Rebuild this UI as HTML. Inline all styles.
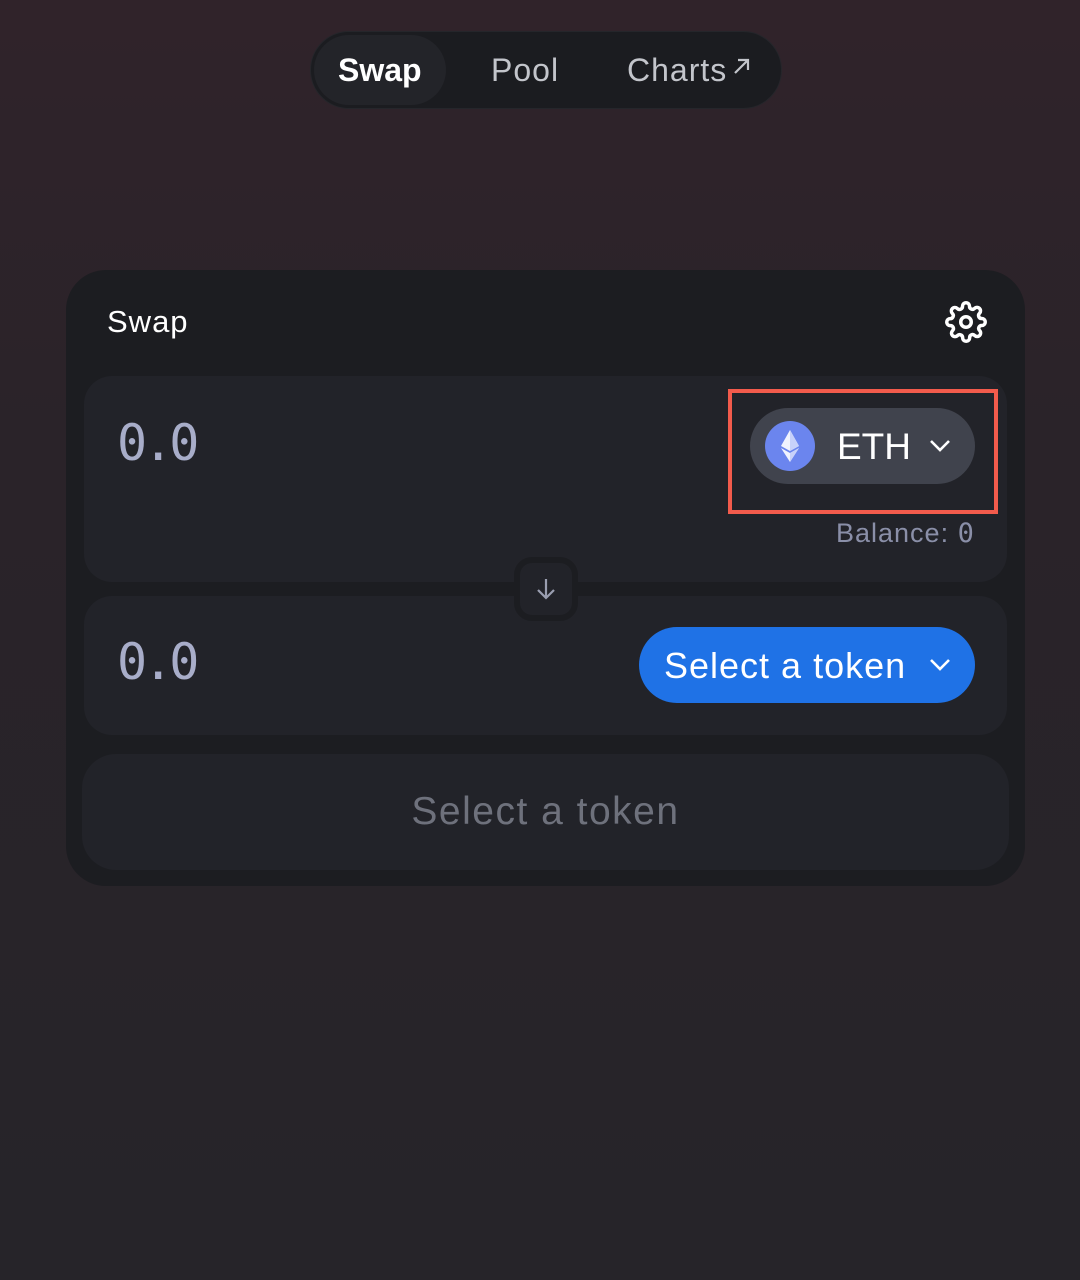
<!DOCTYPE html>
<html><head><style>
*{box-sizing:border-box;margin:0;padding:0}
body{width:1080px;height:1280px;background:linear-gradient(180deg,#30232a 0%,#2a2329 35%,#262429 100%);font-family:"Liberation Sans",sans-serif;position:relative;overflow:hidden}
.abs{position:absolute}
.nav{left:310px;top:31px;width:472px;height:78px;border-radius:39px;background:#1b1c20;border:1px solid #25262b}
.tab{top:35px;height:70px;font-size:32px;color:#c3c5cb;line-height:70px;letter-spacing:1px}
.card{left:66px;top:270px;width:959px;height:616px;border-radius:40px;background:#1c1d21}
.panel{left:84px;width:923px;background:#222329;border-radius:28px}
.num{font-family:"DejaVu Sans Mono","Liberation Mono",monospace;font-size:50px;color:#a8adc9;left:117px;letter-spacing:-4px}
</style></head><body>
<div class="abs nav"></div>
<div class="abs" style="left:314px;top:35px;width:132px;height:70px;border-radius:35px;background:#232429"></div>
<div class="abs tab" style="left:338px;color:#fff;font-weight:bold;letter-spacing:0">Swap</div>
<div class="abs tab" style="left:491px">Pool</div>
<div class="abs tab" style="left:627px">Charts</div>
<svg class="abs" style="left:732px;top:56px" width="20" height="20" viewBox="0 0 20 20"><path d="M3 17L16 4M6 4h10v10" stroke="#c3c5cb" stroke-width="2.2" fill="none"/></svg>

<div class="abs card"></div>
<div class="abs" style="left:107px;top:304px;font-size:31px;color:#fff;letter-spacing:1px">Swap</div>
<svg class="abs" style="left:945px;top:301px" width="42" height="42" viewBox="0 0 24 24" fill="none" stroke="#fff" stroke-width="2" stroke-linecap="round" stroke-linejoin="round"><circle cx="12" cy="12" r="3"/><path d="M19.4 15a1.65 1.65 0 0 0 .33 1.820l.06.06a2 2 0 1 1-2.83 2.83l-.06-.06a1.65 1.65 0 0 0-1.820-.33 1.65 1.65 0 0 0-1 1.510V21a2 2 0 1 1-4 0v-.09A1.65 1.65 0 0 0 9 19.4a1.65 1.65 0 0 0-1.820.33l-.06.06a2 2 0 1 1-2.830-2.830l.06-.06a1.65 1.65 0 0 0 .33-1.820 1.65 1.65 0 0 0-1.510-1H3a2 2 0 1 1 0-4h.09A1.65 1.65 0 0 0 4.6 9a1.65 1.65 0 0 0-.33-1.820l-.06-.06a2 2 0 1 1 2.830-2.830l.06.06a1.65 1.65 0 0 0 1.820.33H9a1.65 1.65 0 0 0 1-1.510V3a2 2 0 1 1 4 0v.09a1.65 1.65 0 0 0 1 1.510 1.65 1.65 0 0 0 1.820-.33l.06-.06a2 2 0 1 1 2.830 2.830l-.06.06a1.65 1.65 0 0 0-.33 1.820V9a1.65 1.65 0 0 0 1.510 1H21a2 2 0 1 1 0 4h-.09a1.65 1.65 0 0 0-1.510 1z"/></svg>

<div class="abs panel" style="top:376px;height:206px"></div>
<div class="abs num" style="top:414px">0.0</div>
<div class="abs" style="left:750px;top:408px;width:225px;height:76px;border-radius:38px;background:#40434d"></div>
<div class="abs" style="left:765px;top:421px;width:50px;height:50px;border-radius:25px;background:#6b85ee"></div>
<svg class="abs" style="left:765px;top:421px" width="50" height="50" viewBox="0 0 50 50"><path d="M25 9L16 25l9 5 9-5z" fill="#fff" opacity=".9"/><path d="M25 9v21l9-5z" fill="#c7d1fa"/><path d="M16 27l9 14 9-14-9 5z" fill="#fff" opacity=".9"/><path d="M25 32v9l9-14z" fill="#c7d1fa"/></svg>
<div class="abs" style="left:837px;top:426px;font-size:37px;color:#fff">ETH</div>
<svg class="abs" style="left:928px;top:436px" width="24" height="20" viewBox="0 0 24 20"><path d="M3 5l9 9 9-9" stroke="#fff" stroke-width="2.6" fill="none"/></svg>
<div class="abs" style="left:728px;top:389px;width:270px;height:125px;border:4px solid #f25b4c"></div>
<div class="abs" style="left:836px;top:518px;font-size:27px;color:#8a8fa8;letter-spacing:1px">Balance: <span style="font-family:'DejaVu Sans Mono',monospace">0</span></div>

<div class="abs panel" style="top:596px;height:139px"></div>
<div class="abs num" style="top:633px">0.0</div>
<div class="abs" style="left:639px;top:627px;width:336px;height:76px;border-radius:38px;background:#1f72e6"></div>
<div class="abs" style="left:664px;top:645px;font-size:36px;color:#fff;letter-spacing:1px">Select a token</div>
<svg class="abs" style="left:928px;top:655px" width="24" height="20" viewBox="0 0 24 20"><path d="M3 5l9 9 9-9" stroke="#fff" stroke-width="2.6" fill="none"/></svg>

<div class="abs" style="left:514px;top:557px;width:64px;height:64px;border-radius:18px;background:#222329;border:6px solid #1c1d21"></div>
<svg class="abs" style="left:533px;top:576px" width="26" height="26" viewBox="0 0 26 26"><path d="M13 3v19M5 14l8 8 8-8" stroke="#9a9eb0" stroke-width="2.2" fill="none"/></svg>

<div class="abs" style="left:82px;top:754px;width:927px;height:116px;border-radius:34px;background:#222329"></div>
<div class="abs" style="left:82px;top:790px;width:927px;text-align:center;font-size:39px;color:#6e717c;letter-spacing:1.5px">Select a token</div>
</body></html>
